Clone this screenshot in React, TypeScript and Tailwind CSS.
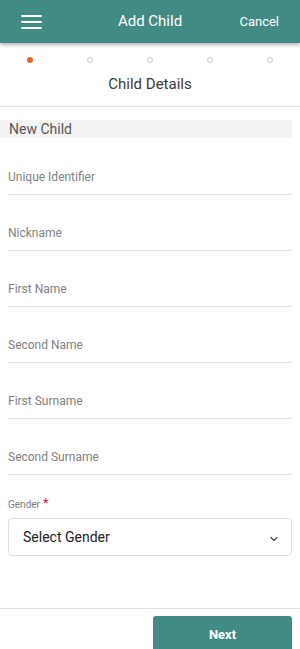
import * as React from 'react'

const fields = [
  'Unique Identifier',
  'Nickname',
  'First Name',
  'Second Name',
  'First Surname',
  'Second Surname',
]

export default function App() {
  return (
    <div className="flex h-[649px] w-[300px] flex-col overflow-hidden bg-white font-['Roboto',sans-serif]">
      {/* Header */}
      <header className="relative z-10 flex h-[43px] shrink-0 items-center bg-[#428a84] px-[21px] shadow-[0_2px_4px_rgba(0,0,0,0.3)]">
        <div className="w-[44px]">
          <div className="flex w-[21px] flex-col gap-[4px]">
            <span className="h-[2px] w-full rounded bg-white" />
            <span className="h-[2px] w-full rounded bg-white" />
            <span className="h-[2px] w-full rounded bg-white" />
          </div>
        </div>
        <h1 className="flex-1 text-center text-[15px] text-white">Add Child</h1>
        <span className="w-[44px] text-right text-[13px] text-white">Cancel</span>
      </header>

      {/* Steps */}
      <div className="flex h-[33px] shrink-0 items-center justify-between px-[27px] pt-[1px]">
        <span className="h-[6px] w-[6px] rounded-full bg-[#e4692c]" />
        <span className="h-[6px] w-[6px] rounded-full border border-[#c8c8c8]" />
        <span className="h-[6px] w-[6px] rounded-full border border-[#c8c8c8]" />
        <span className="h-[6px] w-[6px] rounded-full border border-[#c8c8c8]" />
        <span className="h-[6px] w-[6px] rounded-full border border-[#c8c8c8]" />
      </div>
      <div className="flex h-[31px] shrink-0 items-start justify-center border-b border-[#e2e2e2]">
        <h2 className="text-[15px] leading-[16px] text-[#3a3a3a]">Child Details</h2>
      </div>

      {/* Form */}
      <main className="flex-1 pt-[13px]">
        <div className="mr-[8px] flex h-[18px] items-center bg-[#f3f3f3] pl-[9px] text-[14px] text-[#555]">
          New Child
        </div>

        <div className="px-[8px] pt-[1px]">
          {fields.map((f) => (
            <div key={f} className="flex h-[56px] items-end border-b border-[#e4e4e4] pb-[9px]">
              <span className="text-[12px] leading-[16px] text-[#808080]">{f}</span>
            </div>
          ))}

          <div className="pt-[24px]">
            <label className="flex items-start text-[10px] leading-[12px] text-[#7a7a7a]">
              Gender
              <span className="ml-[3px] mt-[-2px] text-[13px] leading-[12px] text-[#d32020]">*</span>
            </label>
            <div className="mt-[7px] flex h-[38px] items-center justify-between rounded-[4px] border border-[#dedede] pl-[14px] pr-[11px]">
              <span className="text-[14px] text-[#222]">Select Gender</span>
              <svg className="mt-[3px] h-[12px] w-[12px]" viewBox="0 0 24 24" fill="none" stroke="#444" strokeWidth={2.5} strokeLinecap="round" strokeLinejoin="round">
                <path d="M6 9l6 6 6-6" />
              </svg>
            </div>
          </div>
        </div>
      </main>

      {/* Footer */}
      <footer className="flex h-[41px] shrink-0 items-start justify-end border-t border-[#e2e2e2] pr-[8px] pt-[7px]">
        <button className="h-[38px] w-[139px] shrink-0 rounded-t-[3px] bg-[#428a84] text-[13px] font-bold text-white">
          Next
        </button>
      </footer>
    </div>
  )
}
